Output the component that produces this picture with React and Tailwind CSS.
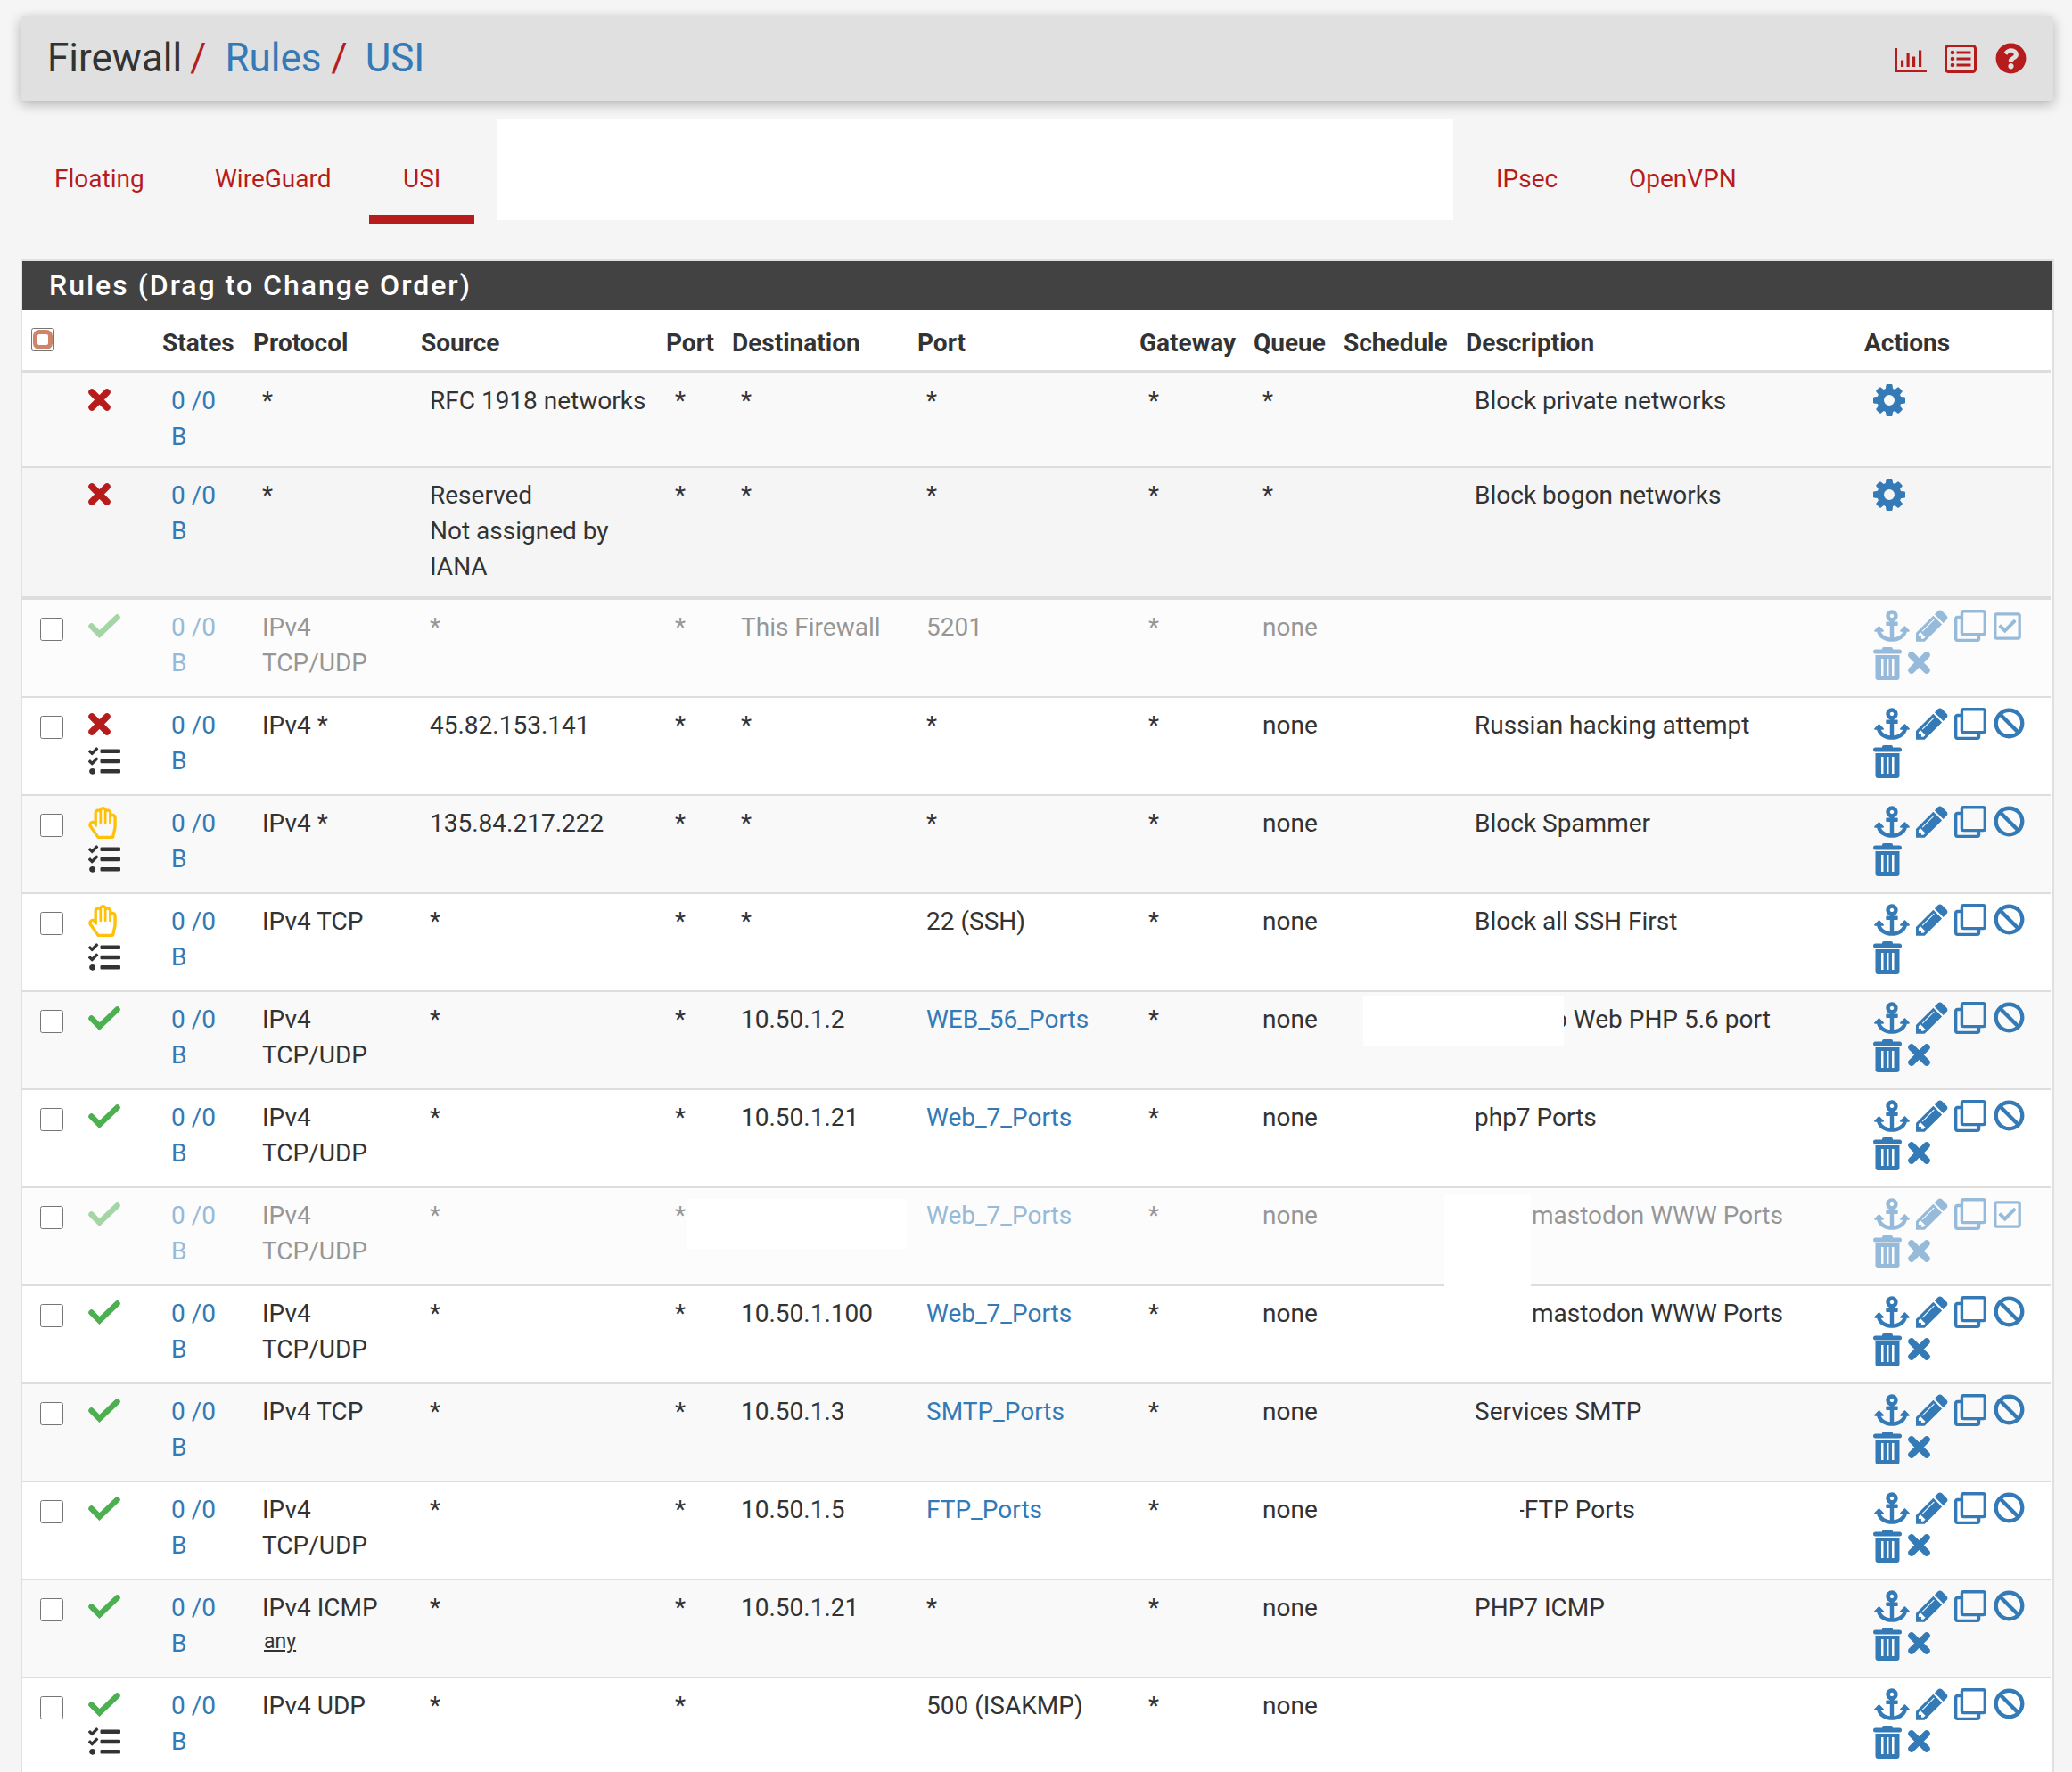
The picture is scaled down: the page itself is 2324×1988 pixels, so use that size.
import React from "react";
import { FaAnchor, FaBan, FaQuestionCircle, FaRegCheckSquare, FaRegClone, FaRegHandPaper, FaTasks } from "react-icons/fa";

const blue = "text-[#337ab7]";

// font awesome 4 shapes that the newer icon sets changed
const Gear = ({ className }) => (
  <svg viewBox="0 0 1792 1792" className={className} fill="currentColor">
    <path d="M1152 896q0-106-75-181t-181-75-181 75-75 181 75 181 181 75 181-75 75-181zm512-109v222q0 12-8 23t-20 13l-185 28q-19 54-39 91 35 50 107 138 10 12 10 25t-9 23q-27 37-99 108t-94 71q-12 0-26-9l-138-108q-44 23-91 38-16 136-29 186-7 28-36 28h-222q-14 0-24.5-8.5t-11.5-21.5l-28-184q-49-16-90-37l-141 107q-10 9-25 9-14 0-25-11-126-114-165-168-7-10-7-23 0-12 8-23 15-21 51-66.5t54-70.5q-27-50-41-99l-183-27q-13-2-21-12.5t-8-23.5v-222q0-12 8-23t19-13l186-28q14-46 39-92-40-57-107-138-10-12-10-24 0-10 9-23 26-36 98.5-107.5t94.5-71.5q13 0 26 10l138 107q44-23 91-38 16-136 29-186 7-28 36-28h222q14 0 24.5 8.5t11.5 21.5l28 184q49 16 90 37l142-107q9-9 24-9 13 0 25 10 129 119 165 170 7 8 7 22 0 12-8 23-15 21-51 66.5t-54 70.5q26 50 41 98l183 28q13 2 21 12.5t8 23.5z" />
  </svg>
);

const Pencil = ({ className }) => (
  <svg viewBox="130 130 1540 1540" className={className} fill="currentColor">
    <path d="M491 1536l91-91-235-235-91 91v107h128v128h107zm523-928q0-22-22-22-10 0-17 7l-542 542q-7 7-7 17 0 22 22 22 10 0 17-7l542-542q7-7 7-17zm-54-192l416 416-832 832h-416v-416zm683 96q0 53-37 90l-166 166-416-416 166-165q36-38 90-38 53 0 91 38l235 234q37 39 37 91z" />
  </svg>
);

const Trash = ({ className }) => (
  <svg viewBox="0 0 32 37" className={className} fill="currentColor">
    <rect x="10" y="0" width="12" height="5" rx="2" />
    <rect x="0" y="2.5" width="32" height="5" rx="2.5" />
    <path
      fillRule="evenodd"
      d="M2.5 9h27v25q0 3-3 3h-21q-3 0-3-3zM9 13v19h2.5v-19zM15 13v19h2.5v-19zM21 13v19h2.5v-19z"
    />
  </svg>
);

const Times = ({ className }) => (
  <svg viewBox="0 0 25 25" className={className} fill="none" stroke="currentColor" strokeWidth="7.5" strokeLinecap="round">
    <path d="M4 4L21 21M21 4L4 21" />
  </svg>
);

const Check = ({ className }) => (
  <svg viewBox="0 0 36 27" className={className} fill="none" stroke="currentColor" strokeWidth="6.5" strokeLinecap="round">
    <path d="M3.5 13.5L12.5 22.5L32.5 3.5" />
  </svg>
);

const BarChart = ({ className }) => (
  <svg viewBox="0 0 36 27" className={className} fill="currentColor">
    <path d="M0 0h3v24h33v3H1.5Q0 27 0 25.5z" />
    <rect x="7" y="13.5" width="3.2" height="7.5" />
    <rect x="13.5" y="5" width="3.2" height="16" />
    <rect x="20" y="9.5" width="3.2" height="11.5" />
    <rect x="27" y="2.5" width="3.2" height="18.5" />
  </svg>
);

const ListBox = ({ className }) => (
  <svg viewBox="0 0 36 32" className={className} fill="currentColor">
    <rect x="1.5" y="1.5" width="33" height="29" rx="3" fill="none" stroke="currentColor" strokeWidth="3" />
    <circle cx="9" cy="9" r="2.3" />
    <circle cx="9" cy="16" r="2.3" />
    <circle cx="9" cy="23" r="2.3" />
    <rect x="13.5" y="7.5" width="16" height="3" />
    <rect x="13.5" y="14.5" width="16" height="3" />
    <rect x="13.5" y="21.5" width="16" height="3" />
  </svg>
);

const columns = [
  { label: "", width: "w-[65px]" },
  { label: "", width: "w-[92px]" },
  { label: "States", width: "w-[102px]" },
  { label: "Protocol", width: "w-[188px]" },
  { label: "Source", width: "w-[275px]" },
  { label: "Port", width: "w-[74px]" },
  { label: "Destination", width: "w-[208px]" },
  { label: "Port", width: "w-[249px]" },
  { label: "Gateway", width: "w-[128px]" },
  { label: "Queue", width: "w-[101px]" },
  { label: "Schedule", width: "w-[137px]" },
  { label: "Description", width: "w-[447px]" },
  { label: "Actions", width: "w-[210px]" },
];

const rows = [
  { system: true, state: "block", proto: "*", source: "RFC 1918 networks", sport: "*", dest: "*", port: "*", queue: "*", desc: "Block private networks", height: "h-[106px]", bg: "bg-[#f9f9f9]" },
  { system: true, state: "block", proto: "*", source: "Reserved\nNot assigned by\nIANA", sport: "*", dest: "*", port: "*", queue: "*", desc: "Block bogon networks", height: "h-[148px]", bg: "bg-[#f5f5f5]", thick: true },
  { disabled: true, state: "pass", proto: "IPv4\nTCP/UDP", source: "*", sport: "*", dest: "This Firewall", port: "5201", queue: "none", desc: "" },
  { state: "block", log: true, proto: "IPv4 *", source: "45.82.153.141", sport: "*", dest: "*", port: "*", queue: "none", desc: "Russian hacking attempt", noX: true },
  { state: "hand", log: true, proto: "IPv4 *", source: "135.84.217.222", sport: "*", dest: "*", port: "*", queue: "none", desc: "Block Spammer", noX: true },
  { state: "hand", log: true, proto: "IPv4 TCP", source: "*", sport: "*", dest: "*", port: "22 (SSH)", queue: "none", desc: "Block all SSH First", noX: true },
  { state: "pass", proto: "IPv4\nTCP/UDP", source: "*", sport: "*", dest: "10.50.1.2", port: "WEB_56_Ports", alias: true, queue: "none", desc: "to Web PHP 5.6 port", descPad: "pl-[89px]" },
  { state: "pass", proto: "IPv4\nTCP/UDP", source: "*", sport: "*", dest: "10.50.1.21", port: "Web_7_Ports", alias: true, queue: "none", desc: "php7 Ports" },
  { disabled: true, state: "pass", proto: "IPv4\nTCP/UDP", source: "*", sport: "*", dest: "", port: "Web_7_Ports", alias: true, queue: "none", desc: "mastodon WWW Ports", descPad: "pl-[74px]" },
  { state: "pass", proto: "IPv4\nTCP/UDP", source: "*", sport: "*", dest: "10.50.1.100", port: "Web_7_Ports", alias: true, queue: "none", desc: "mastodon WWW Ports", descPad: "pl-[74px]" },
  { state: "pass", proto: "IPv4 TCP", source: "*", sport: "*", dest: "10.50.1.3", port: "SMTP_Ports", alias: true, queue: "none", desc: "Services SMTP" },
  { state: "pass", proto: "IPv4\nTCP/UDP", source: "*", sport: "*", dest: "10.50.1.5", port: "FTP_Ports", alias: true, queue: "none", desc: "-FTP Ports", descPad: "pl-[58px]" },
  { state: "pass", proto: "IPv4 ICMP", any: true, source: "*", sport: "*", dest: "10.50.1.21", port: "*", queue: "none", desc: "PHP7 ICMP" },
  { state: "pass", log: true, proto: "IPv4 UDP", source: "*", sport: "*", dest: "", port: "500 (ISAKMP)", queue: "none", desc: "" },
];

const StateIcon = ({ state, log }) => (
  <div className="flex flex-col items-start">
    <div className="h-[42px]">
      {state === "pass" && <Check className="mt-[5px] w-[36px] h-[27px] text-[#4caf50]" />}
      {state === "block" && <Times className="mt-[6px] w-[25px] h-[25px] text-[#b71c1c]" />}
      {state === "hand" && <FaRegHandPaper className="mt-[1px] w-[32px] h-[36px] text-[#ffc107]" />}
    </div>
    {log && <FaTasks className="w-[36px] h-[36px] text-[#333]" />}
  </div>
);

const Actions = ({ row }) => {
  if (row.system) {
    return <Gear className={`mt-[-2px] ml-[-2px] w-[42px] h-[42px] ${blue}`} />;
  }
  return (
    <div className={`ml-[2px] ${blue}`}>
      <div className="flex items-start h-[42px]">
        <FaAnchor className="w-[40px] h-[36px]" />
        <Pencil className="ml-[7px] w-[36px] h-[36px]" />
        <FaRegClone className="ml-[7px] w-[36px] h-[36px]" />
        {row.disabled ? (
          <FaRegCheckSquare className="ml-[6px] mt-[1px] w-[35px] h-[35px]" />
        ) : (
          <FaBan className="ml-[8px] w-[35px] h-[35px]" />
        )}
      </div>
      <div className="flex items-start">
        <Trash className="ml-[-1px] w-[32px] h-[37px]" />
        {!row.noX && <Times className="ml-[7px] mt-[5px] w-[25px] h-[25px]" />}
      </div>
    </div>
  );
};

const Row = ({ row }) => {
  const bg = row.bg || (row.disabled ? "bg-[#fcfcfc]" : row.even ? "bg-white" : "bg-[#f9f9f9]");
  const border = row.thick ? "border-b-4" : "border-b-2";
  const cell = `align-top pt-[11px] border-[#ddd] ${border} ${bg}`;
  const fade = row.disabled ? "opacity-50" : "";
  const text = (value, extra = "pl-[10px]") => (
    <td className={`${cell} ${extra}`}>
      <div className={`whitespace-pre-line ${fade}`}>{value}</div>
    </td>
  );

  return (
    <tr className={row.height || "h-[110px]"}>
      <td className={`${cell} pl-[20px]`}>
        {!row.system && <input type="checkbox" className="block m-0 mt-[9px] w-[26px] h-[26px]" />}
      </td>
      <td className={`${cell} pl-[9px]`}>
        <div className={fade}>
          <StateIcon state={row.state} log={row.log} />
        </div>
      </td>
      {text(
        <span className={blue}>
          0 /0
          <br />B
        </span>
      )}
      {text(
        <>
          {row.proto}
          {row.any && <div className="text-[23px] leading-[36px] underline ml-[2px]">any</div>}
        </>
      )}
      {text(row.source)}
      {text(row.sport)}
      {text(row.dest)}
      {text(row.alias ? <span className={blue}>{row.port}</span> : row.port)}
      {text("*")}
      {text(row.queue)}
      {text("")}
      {text(row.desc, row.descPad || "pl-[10px]")}
      <td className={`${cell} pl-[9px]`}>
        <div className={fade}>
          <Actions row={row} />
        </div>
      </td>
    </tr>
  );
};

export default function App() {
  // stripes only start counting after the two system rows
  const list = rows.map((r, i) => ({ ...r, even: i % 2 === 1 }));

  return (
    <div className="relative w-[2324px] h-[1988px] overflow-hidden bg-[#f5f5f5] [font-family:Roboto,sans-serif] text-[28px] leading-[40px] text-[#333]">
      <div className="absolute left-[23px] top-[18px] w-[2280px] h-[95px] bg-[#e0e0e0] rounded-[3px] shadow-[0_4px_14px_rgba(0,0,0,0.28)] flex items-center pl-[30px]">
        <h1 className="text-[44px] leading-[52px] font-normal flex mt-[-1px]">
          <span>Firewall</span>
          <span className="text-[#b71c1c] ml-[9px]">/</span>
          <span className={`${blue} ml-[21px]`}>Rules</span>
          <span className="text-[#b71c1c] ml-[11px]">/</span>
          <span className={`${blue} ml-[20px]`}>USI</span>
        </h1>
        <div className="absolute left-[2102px] top-[30px] flex items-center text-[#b71c1c]">
          <BarChart className="w-[36px] h-[27px] mt-[3px]" />
          <ListBox className="ml-[20px] w-[36px] h-[32px]" />
          <FaQuestionCircle className="ml-[21px] w-[35px] h-[35px]" />
        </div>
      </div>

      <div className="absolute left-0 top-[133px] w-full h-[120px] text-[#b71c1c]">
        <a className="absolute left-[61px] top-[48px]">Floating</a>
        <a className="absolute left-[241px] top-[48px]">WireGuard</a>
        <a className="absolute left-[452px] top-[48px]">USI</a>
        <div className="absolute left-[414px] top-[108px] w-[118px] h-[10px] bg-[#b71c1c]" />
        <div className="absolute left-[558px] top-0 w-[1072px] h-[114px] bg-white" />
        <a className="absolute left-[1678px] top-[48px]">IPsec</a>
        <a className="absolute left-[1827px] top-[48px]">OpenVPN</a>
      </div>

      <div className="absolute left-[23px] top-[291px] w-[2281px] border-2 border-[#e0e0e0] bg-white">
        <div className="h-[55px] bg-[#424242] pl-[30px] text-white text-[32px] leading-[55px] font-medium tracking-[2px]">
          Rules (Drag to Change Order)
        </div>
        <table className="table-fixed w-[2276px] border-separate border-spacing-0">
          <colgroup>
            {columns.map((c, i) => (
              <col key={i} className={c.width} />
            ))}
          </colgroup>
          <thead>
            <tr className="h-[71px]">
              {columns.map((c, i) => (
                <th key={i} className="align-top pt-[17px] text-left font-bold border-b-4 border-[#ddd]">
                  {i === 0 ? (
                    <div className="relative w-[40px] h-[30px] mt-[-1px]">
                      <input type="checkbox" className="absolute left-[10px] top-[4px] m-0 w-[26px] h-[26px]" />
                      <div className="absolute left-[12px] top-[6px] w-[22px] h-[22px] rounded-[7px] border-[5px] border-[#cd8569] bg-white" />
                    </div>
                  ) : (
                    c.label
                  )}
                </th>
              ))}
            </tr>
          </thead>
          <tbody>
            {list.map((row, i) => (
              <Row key={i} row={row} />
            ))}
          </tbody>
        </table>
      </div>

      {/* blanked out parts of the screenshot */}
      <div className="absolute left-[1529px] top-[1117px] w-[225px] h-[56px] bg-white" />
      <div className="absolute left-[770px] top-[1345px] w-[247px] h-[56px] bg-white" />
      <div className="absolute left-[1620px] top-[1340px] w-[97px] h-[106px] bg-white" />
      <div className="absolute left-[1620px] top-[1680px] w-[85px] h-[50px] bg-white" />
    </div>
  );
}
